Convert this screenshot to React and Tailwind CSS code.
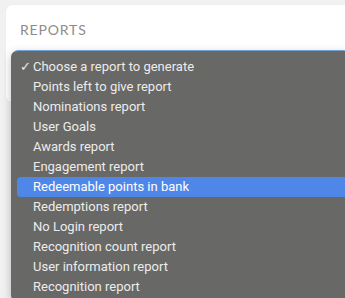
const reports = [
  "Choose a report to generate",
  "Points left to give report",
  "Nominations report",
  "User Goals",
  "Awards report",
  "Engagement report",
  "Redeemable points in bank",
  "Redemptions report",
  "No Login report",
  "Recognition count report",
  "User information report",
  "Recognition report",
];

export default function App() {
  const selected = 0;
  const highlighted = 6;

  return (
    <div className="relative h-[298px] w-[345px] overflow-hidden bg-[#f1f1f1] pl-[6px] pt-[5px]">
      {/* card */}
      <div className="h-[97px] rounded-l-md bg-white pl-[14px] pt-[15px] shadow-[0_0_2px_rgba(0,0,0,0.06)]">
        <h2
          className="text-[14px] leading-[20px] tracking-[0.06em] text-[#8c8c8c]"
          style={{ fontFamily: "Lato, 'Open Sans', sans-serif" }}
        >
          REPORTS
        </h2>
        <div className="ml-[-8px] mt-[10px] h-[36px] rounded-l-md border border-[#7fb0e6] bg-white" />
      </div>

      {/* open select menu */}
      <div
        className="absolute left-[11px] top-[51px] w-[350px] rounded-md bg-[#686866] pt-[6px] pb-[4px] shadow-[0_2px_8px_rgba(0,0,0,0.25)]"
        style={{ fontFamily: "Roboto, 'Liberation Sans', sans-serif" }}
      >
        {reports.map((label, i) => (
          <div
            key={label}
            className={
              i === highlighted
                ? "mx-[6px] flex h-[20px] items-center rounded-[4px] bg-[#4f87e9] text-[13px] text-white"
                : "mx-[6px] flex h-[20px] items-center text-[13px] text-[#ececec]"
            }
          >
            <span className="w-[16px] pl-[3px] text-[13px]">
              {i === selected ? "✓" : ""}
            </span>
            <span>{label}</span>
          </div>
        ))}
      </div>
    </div>
  );
}
